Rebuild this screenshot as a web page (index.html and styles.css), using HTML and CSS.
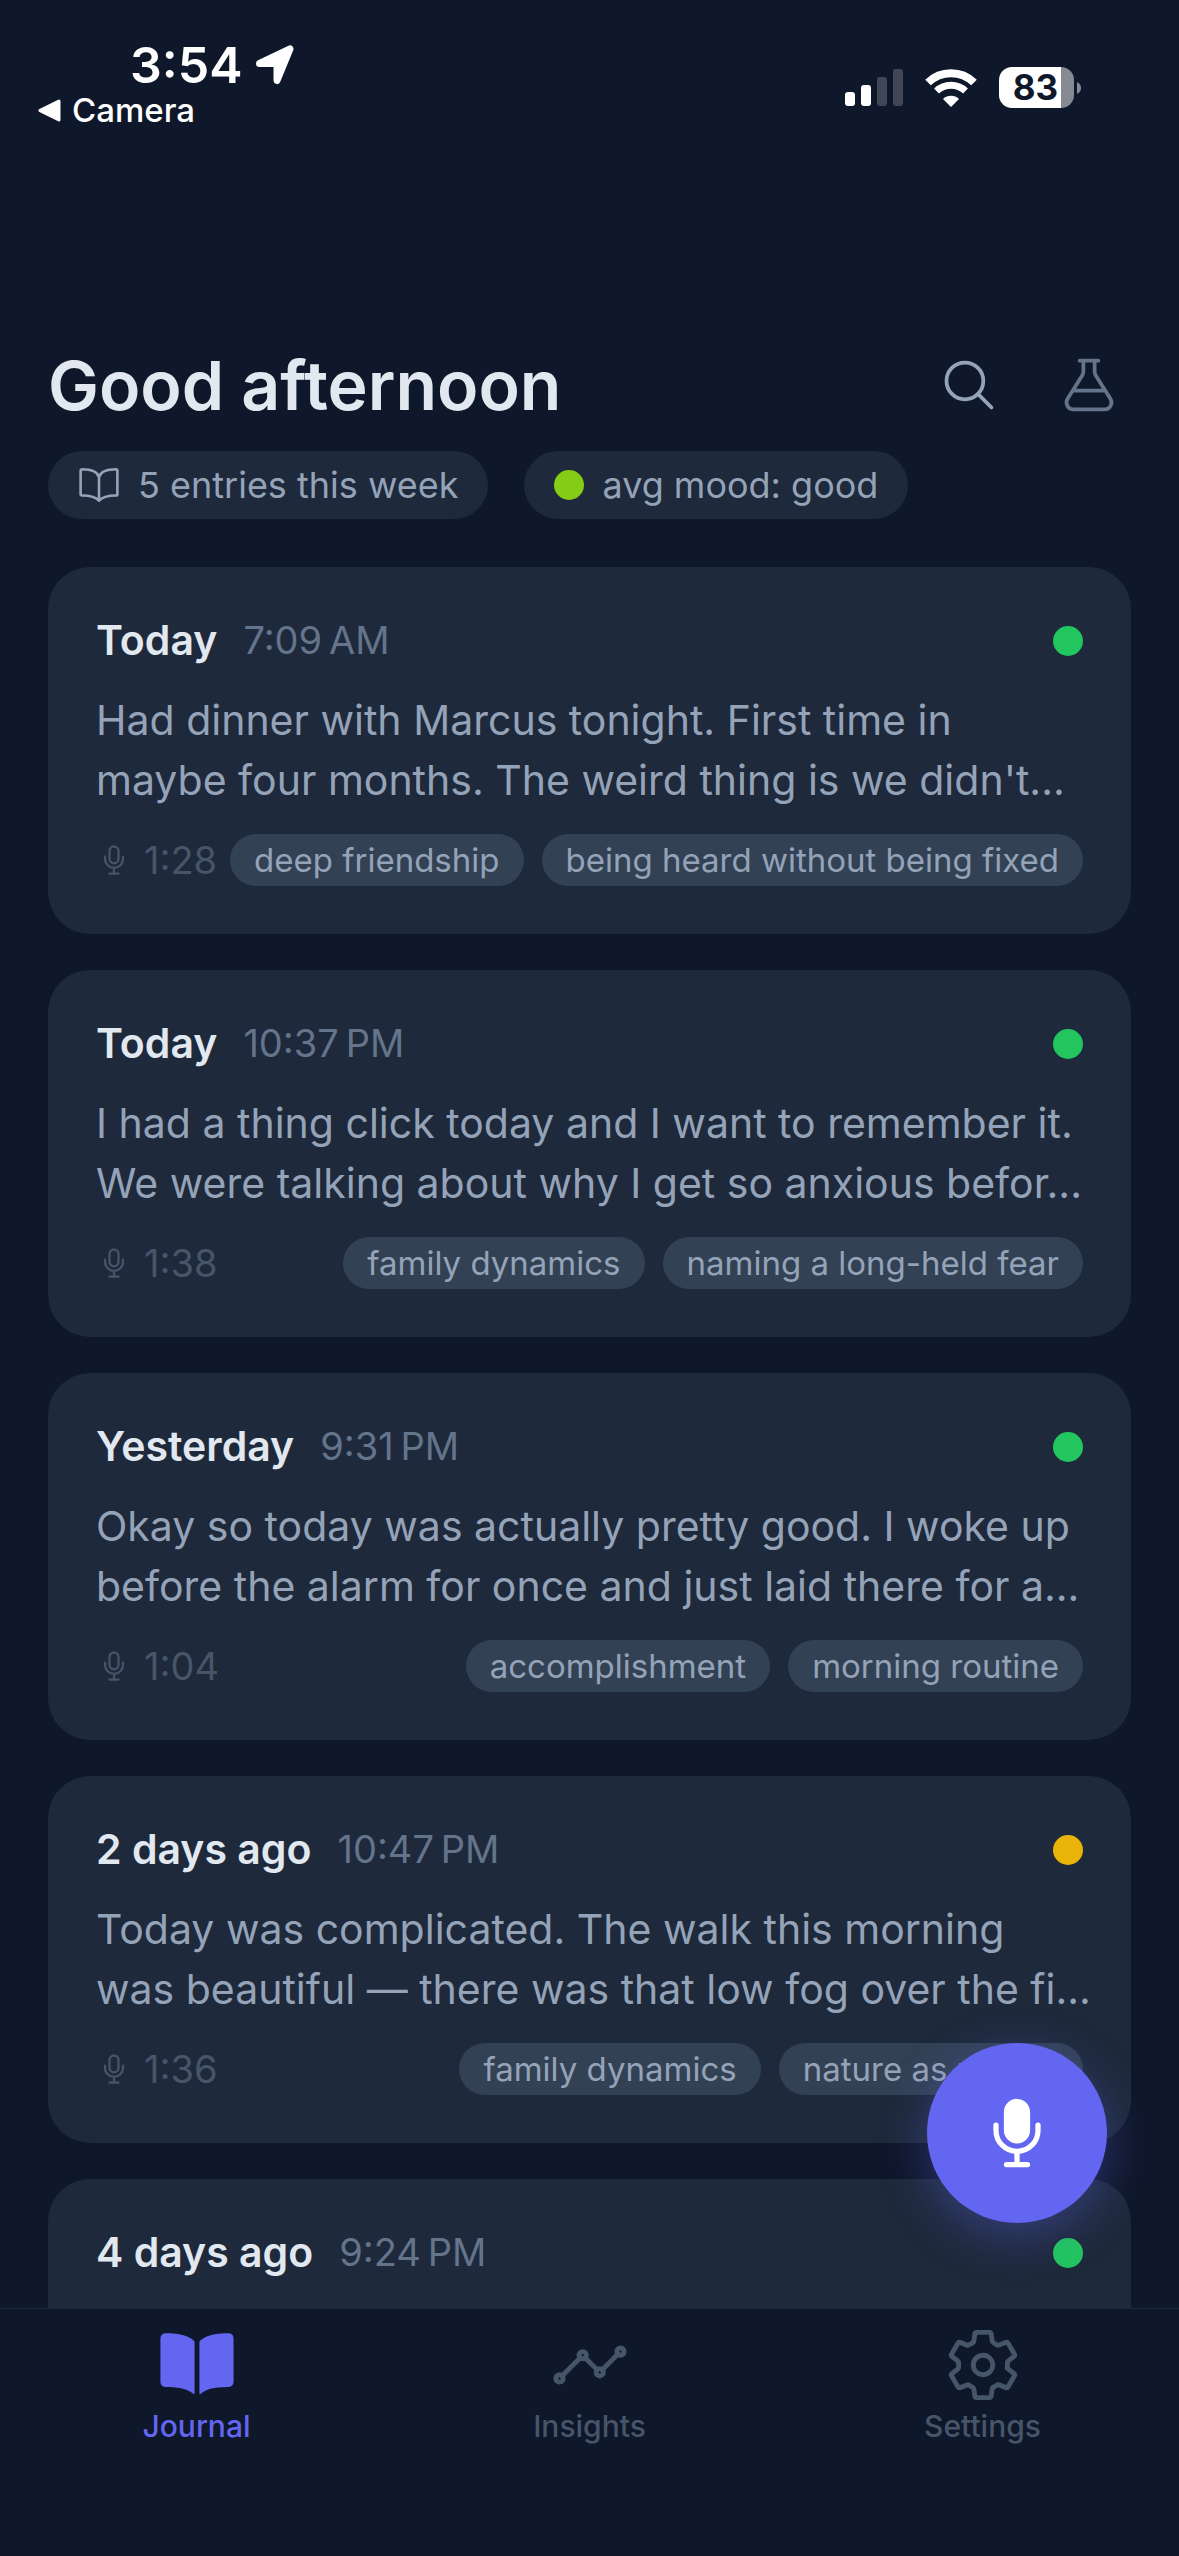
FILE: index.html
```html
<!DOCTYPE html>
<html lang="en">
    <head>
        <meta charset="utf-8">
        <meta name="viewport" content="width=device-width, initial-scale=1">
        <title>Journal</title>
        <link rel="stylesheet" href="styles.css">
    </head>
    <body>
        <!-- shared icons -->
        <svg class="sprite" aria-hidden="true">
            <symbol id="mic-outline" viewBox="0 0 512 512">
                <path d="M192 448h128M384 208v32c0 70.4-57.6 128-128 128h0c-70.4 0-128-57.6-128-128v-32M256 368v80"/>
                <path d="M256 64a63.68 63.68 0 00-64 64v111c0 35.2 29 65 64 65s64-29 64-65V128c0-36-28-64-64-64z"/>
            </symbol>
        </svg>

        <div class="app">
            <div class="status-bar">
                <div class="status-left">
                    <div class="clock">
                        <span>3:54</span>
                        <svg class="location-arrow" viewBox="0 0 40 40"><path d="M35 4L22 35.500V18.500H4.500Z" fill="#fff" stroke="#fff" stroke-width="7" stroke-linejoin="round"/></svg>
                    </div>
                    <a class="back-link" href="#">
                        <svg class="back-arrow" viewBox="0 0 22 22"><path d="M2 11L20 2v18Z" fill="#fff" stroke="#fff" stroke-width="3" stroke-linejoin="round"/></svg>
                        <span>Camera</span>
                    </a>
                </div>
                <div class="status-right">
                    <svg class="signal" viewBox="0 0 58 38">
                        <rect x="0" y="23" width="10" height="14" rx="3" fill="#fff"/>
                        <rect x="16" y="16" width="10" height="21" rx="3" fill="#fff"/>
                        <rect x="32" y="8" width="10" height="29" rx="3" fill="#414757"/>
                        <rect x="48" y="0" width="10" height="37" rx="3" fill="#414757"/>
                    </svg>
                    <svg class="wifi" viewBox="0 0 52 38">
                        <path d="M3 13.500A33 33 0 0149 13.500" fill="none" stroke="#fff" stroke-width="8"/>
                        <path d="M11.500 22A21 21 0 0140.500 22" fill="none" stroke="#fff" stroke-width="7"/>
                        <path d="M26 38L18 30A11.500 11.500 0 0134 30Z" fill="#fff"/>
                    </svg>
                    <div class="battery">
                        <span class="battery-level">83</span>
                        <svg class="battery-tip" viewBox="0 0 4 12"><path d="M0 0Q4 2 4 6T0 12Z" fill="#868a94"/></svg>
                    </div>
                </div>
            </div>

            <main class="content">
                <header class="header">
                    <h1 class="title">Good afternoon</h1>
                    <div class="actions">
                        <button type="button" class="icon-btn" aria-label="Search">
                            <svg class="icon" viewBox="0 0 512 512"><path d="M221.09 64a157.09 157.09 0 10157.09 157.09A157.1 157.1 0 00221.09 64zM338.29 338.29L448 448"/></svg>
                        </button>
                        <button type="button" class="icon-btn icon-btn-dim" aria-label="Lab">
                            <svg class="icon" viewBox="0 0 512 512"><path d="M176 48h160M118 304h276M208 48v93.48a64.09 64.09 0 01-9.88 34.18L73.21 373.49C48.4 412.78 76.63 464 123.08 464h265.84c46.46 0 74.68-51.22 49.87-90.51L313.87 175.66A64.09 64.09 0 01304 141.48V48"/></svg>
                        </button>
                    </div>
                </header>

                <div class="stats">
                    <div class="chip">
                        <svg class="icon" viewBox="0 0 512 512"><path d="M256 160c16-63.16 76.43-95.41 208-96a15.94 15.94 0 0116 16v288a16 16 0 01-16 16c-128 0-177.45 25.81-208 64-30.37-38-80-64-208-64-9.88 0-16-8.05-16-17.93V80a15.94 15.94 0 0116-16c131.57.59 192 32.84 208 96zM256 160v288"/></svg>
                        <span>5 entries this week</span>
                    </div>
                    <div class="chip">
                        <span class="dot dot-good"></span>
                        <span>avg mood: good</span>
                    </div>
                </div>

                <div class="entries">
                    <article class="card">
                        <div class="card-head">
                            <h2 class="day">Today</h2>
                            <span class="time">7:09&#8239;AM</span>
                            <span class="dot dot-great"></span>
                        </div>
                        <p class="excerpt">Had dinner with Marcus tonight. First time in<br>maybe four months. The weird thing is we didn't...</p>
                        <div class="card-foot">
                            <span class="duration"><svg class="icon"><use href="#mic-outline"/></svg>1:28</span>
                            <span class="tag">deep friendship</span>
                            <span class="tag">being heard without being fixed</span>
                        </div>
                    </article>

                    <article class="card">
                        <div class="card-head">
                            <h2 class="day">Today</h2>
                            <span class="time">10:37&#8239;PM</span>
                            <span class="dot dot-great"></span>
                        </div>
                        <p class="excerpt">I had a thing click today and I want to remember it.<br>We were talking about why I get so anxious befor...</p>
                        <div class="card-foot">
                            <span class="duration"><svg class="icon"><use href="#mic-outline"/></svg>1:38</span>
                            <span class="tag">family dynamics</span>
                            <span class="tag">naming a long-held fear</span>
                        </div>
                    </article>

                    <article class="card">
                        <div class="card-head">
                            <h2 class="day">Yesterday</h2>
                            <span class="time">9:31&#8239;PM</span>
                            <span class="dot dot-great"></span>
                        </div>
                        <p class="excerpt">Okay so today was actually pretty good. I woke up<br>before the alarm for once and just laid there for a...</p>
                        <div class="card-foot">
                            <span class="duration"><svg class="icon"><use href="#mic-outline"/></svg>1:04</span>
                            <span class="tag">accomplishment</span>
                            <span class="tag">morning routine</span>
                        </div>
                    </article>

                    <article class="card">
                        <div class="card-head">
                            <h2 class="day">2 days ago</h2>
                            <span class="time">10:47&#8239;PM</span>
                            <span class="dot dot-okay"></span>
                        </div>
                        <p class="excerpt">Today was complicated. The walk this morning<br>was beautiful — there was that low fog over the fi...</p>
                        <div class="card-foot">
                            <span class="duration"><svg class="icon"><use href="#mic-outline"/></svg>1:36</span>
                            <span class="tag">family dynamics</span>
                            <span class="tag">nature as refuge</span>
                        </div>
                    </article>

                    <article class="card">
                        <div class="card-head">
                            <h2 class="day">4 days ago</h2>
                            <span class="time">9:24&#8239;PM</span>
                            <span class="dot dot-great"></span>
                        </div>
                    </article>
                </div>
            </main>

            <nav class="tab-bar">
                <button type="button" class="fab" aria-label="Record entry">
                    <svg class="icon" viewBox="0 0 512 512">
                        <path d="M192 448h128M384 208v32c0 70.4-57.6 128-128 128h0c-70.4 0-128-57.6-128-128v-32M256 368v80"/>
                        <path class="solid" d="M256 320a78.83 78.83 0 01-56.55-24.1A80.89 80.89 0 01176 239V128a79.69 79.69 0 0180-80c44.86 0 80 35.14 80 80v111c0 44.66-35.89 81-80 81z"/>
                    </svg>
                </button>
                <a class="tab tab-active" href="#journal">
                    <svg class="icon" viewBox="0 0 512 512"><path class="solid" d="M202.24 74C166.11 56.75 115.61 48.3 48 48a31.36 31.36 0 00-17.92 5.33A32 32 0 0016 79.9V366c0 19.34 13.76 33.93 32 33.93 71.07 0 142.36 6.64 185.06 47a4.11 4.11 0 006.94-3V106.82a15.89 15.89 0 00-5.46-12A143 143 0 00202.24 74zM481.92 53.3A31.33 31.33 0 00464 48c-67.61.3-118.11 8.71-154.24 26a143.31 143.31 0 00-32.31 20.78 15.93 15.93 0 00-5.45 12v337.13a3.93 3.93 0 006.68 2.81c25.67-25.5 70.72-46.82 185.36-46.81a32 32 0 0032-32v-288a32 32 0 00-14.08-26.61z"/></svg>
                    <span>Journal</span>
                </a>
                <a class="tab" href="#insights">
                    <svg class="icon" viewBox="0 0 512 512">
                        <circle cx="456" cy="168" r="24"/>
                        <circle cx="320" cy="304" r="24"/>
                        <circle cx="208" cy="192" r="24"/>
                        <circle cx="56" cy="344" r="24"/>
                        <path d="M336 288l104-104M224 208l80 80M72 328l120-120"/>
                    </svg>
                    <span>Insights</span>
                </a>
                <a class="tab" href="#settings">
                    <svg class="icon" viewBox="0 0 512 512"><path d="M262.29 192.31a64 64 0 1057.4 57.4 64.13 64.13 0 00-57.4-57.4zM416.39 256a154.34 154.34 0 01-1.53 20.79l45.21 35.46a10.81 10.81 0 012.45 13.75l-42.77 74a10.81 10.81 0 01-13.14 4.59l-44.9-18.08a16.11 16.11 0 00-15.17 1.75A164.48 164.48 0 01325 400.8a15.94 15.94 0 00-8.82 12.14l-6.73 47.89a11.08 11.08 0 01-10.68 9.17h-85.54a11.11 11.11 0 01-10.69-8.87l-6.72-47.82a16.07 16.07 0 00-9-12.22 155.3 155.3 0 01-21.46-12.57 16 16 0 00-15.11-1.71l-44.89 18.07a10.81 10.81 0 01-13.14-4.58l-42.77-74a10.8 10.8 0 012.45-13.75l38.21-30a16.05 16.05 0 006-14.08c-.36-4.17-.58-8.33-.58-12.5s.21-8.27.58-12.35a16 16 0 00-6.07-13.94l-38.19-30A10.81 10.81 0 0149.48 186l42.77-74a10.81 10.81 0 0113.14-4.59l44.9 18.08a16.11 16.11 0 0015.17-1.75A164.48 164.48 0 01187 111.2a15.94 15.94 0 008.82-12.14l6.73-47.89A11.08 11.08 0 01213.23 42h85.54a11.11 11.11 0 0110.69 8.87l6.72 47.82a16.07 16.07 0 009 12.22 155.3 155.3 0 0121.46 12.57 16 16 0 0015.11 1.71l44.89-18.07a10.81 10.81 0 0113.14 4.58l42.77 74a10.8 10.8 0 01-2.45 13.75l-38.21 30a16.05 16.05 0 00-6.05 14.08c.33 4.14.55 8.3.55 12.47z"/></svg>
                    <span>Settings</span>
                </a>
            </nav>
        </div>
    </body>
</html>
```
FILE: styles.css
```css
* {
	padding: 0;
	margin: 0;
	box-sizing: border-box;
}
body {
	background-color: #0f172a;
	color: #e2e8f0;
	font-family: Inter, "Liberation Sans", sans-serif;
}
button {
	border: 0;
	background: none;
	color: inherit;
	font: inherit;
	cursor: pointer;
}
a {
	color: inherit;
	text-decoration: none;
}
.sprite {
	display: none;
}
.app {
	height: 100vh;
	display: flex;
	flex-direction: column;
}
.icon {
	display: block;
	flex: none;
	fill: none;
	stroke: currentColor;
	stroke-width: 32;
	stroke-linecap: round;
	stroke-linejoin: round;
}
.icon .solid {
	fill: currentColor;
	stroke: none;
}

/* status bar */
.status-bar {
	display: flex;
	justify-content: space-between;
	align-items: flex-start;
	padding: 35px 98px 0 38px;
	color: #fff;
}
.clock {
	display: flex;
	align-items: center;
	gap: 12px;
	padding-left: 92px;
	font-size: 50px;
	line-height: 60px;
	font-weight: 600;
}
.location-arrow {
	width: 40px;
	height: 40px;
}
.back-link {
	display: flex;
	align-items: center;
	gap: 11px;
	font-size: 33px;
	line-height: 30px;
	font-weight: 500;
}
.back-arrow {
	width: 23px;
	height: 23px;
}
.status-right {
	display: flex;
	align-items: center;
	gap: 22px;
	padding-top: 32px;
}
.signal {
	width: 58px;
	height: 38px;
}
.wifi {
	width: 52px;
	height: 38px;
}
.battery {
	display: flex;
	align-items: center;
	gap: 3px;
}
.battery-level {
	width: 75px;
	height: 41px;
	padding-right: 2px;
	border-radius: 13px;
	background: linear-gradient(to right, #fff 83%, #868a94 83%);
	color: #0f172a;
	font-size: 35px;
	line-height: 41px;
	font-weight: 700;
	text-align: center;
}
.battery-tip {
	width: 4px;
	height: 12px;
}

/* journal list */
.content {
	flex: 1;
	min-height: 0;
	padding: 218px 48px 0;
	overflow-y: auto;
	scrollbar-width: none;
}
.header {
	display: flex;
	justify-content: space-between;
	align-items: center;
}
.title {
	font-size: 68px;
	line-height: 84px;
	font-weight: 600;
}
.actions {
	display: flex;
	gap: 36px;
	color: #94a3b8;
}
.icon-btn {
	padding: 12px;
}
.icon-btn-dim {
	color: #64748b;
}
.icon-btn .icon {
	width: 60px;
	height: 60px;
}
.stats {
	display: flex;
	gap: 36px;
	margin: 24px 0 48px;
}
.chip {
	display: flex;
	align-items: center;
	gap: 18px;
	padding: 10px 30px;
	border-radius: 36px;
	background-color: #1e293b;
	color: #94a3b8;
	font-size: 36px;
	line-height: 48px;
}
.chip .icon {
	width: 42px;
	height: 42px;
}
.dot {
	flex: none;
	width: 30px;
	height: 30px;
	border-radius: 50%;
}
.dot-great {
	background-color: #22c55e;
}
.dot-good {
	background-color: #84cc16;
}
.dot-okay {
	background-color: #eab308;
}
.entries {
	display: flex;
	flex-direction: column;
	gap: 36px;
}
.card {
	min-height: 240px;
	padding: 48px;
	border-radius: 42px;
	background-color: #1e293b;
}
.card-head {
	display: flex;
	align-items: center;
	gap: 26px;
	line-height: 51px;
}
.card-head .dot {
	margin-left: auto;
}
.day {
	font-size: 41px;
	font-weight: 600;
}
.time {
	color: #64748b;
	font-size: 38px;
}
.excerpt {
	margin: 24px 0;
	color: #94a3b8;
	font-size: 41px;
	line-height: 60px;
	white-space: nowrap;
}
.card-foot {
	display: flex;
	align-items: center;
	gap: 18px;
	white-space: nowrap;
}
.duration {
	display: flex;
	align-items: center;
	gap: 12px;
	margin-right: auto;
	color: #475569;
	font-size: 38px;
	line-height: 52px;
}
/* tags may sit close to the duration when they are long */
.duration + .tag {
	margin-left: -12px;
}
.duration .icon {
	width: 36px;
	height: 36px;
}
.tag {
	padding: 0 24px;
	border-radius: 26px;
	background-color: #334155;
	color: #94a3b8;
	font-size: 33px;
	line-height: 52px;
}

/* bottom tabs */
.tab-bar {
	position: relative;
	display: grid;
	grid-template-columns: repeat(3, 1fr);
	padding: 17px 0 102px;
	border-top: 1px solid #1e293b;
	background-color: #0f172a;
}
.tab {
	display: flex;
	flex-direction: column;
	align-items: center;
	gap: 4px;
	padding-bottom: 10px;
	color: #475569;
	font-size: 30px;
	line-height: 36px;
	font-weight: 500;
}
.tab .icon {
	width: 78px;
	height: 78px;
}
.tab-active {
	color: #6366f1;
}
.fab {
	position: absolute;
	right: 72px;
	bottom: calc(100% + 86px);
	width: 180px;
	height: 180px;
	display: flex;
	align-items: center;
	justify-content: center;
	border-radius: 50%;
	background-color: #6366f1;
	color: #fff;
	box-shadow: 0 12px 48px rgba(99, 102, 241, 0.35);
}
.fab .icon {
	width: 84px;
	height: 84px;
}
```
